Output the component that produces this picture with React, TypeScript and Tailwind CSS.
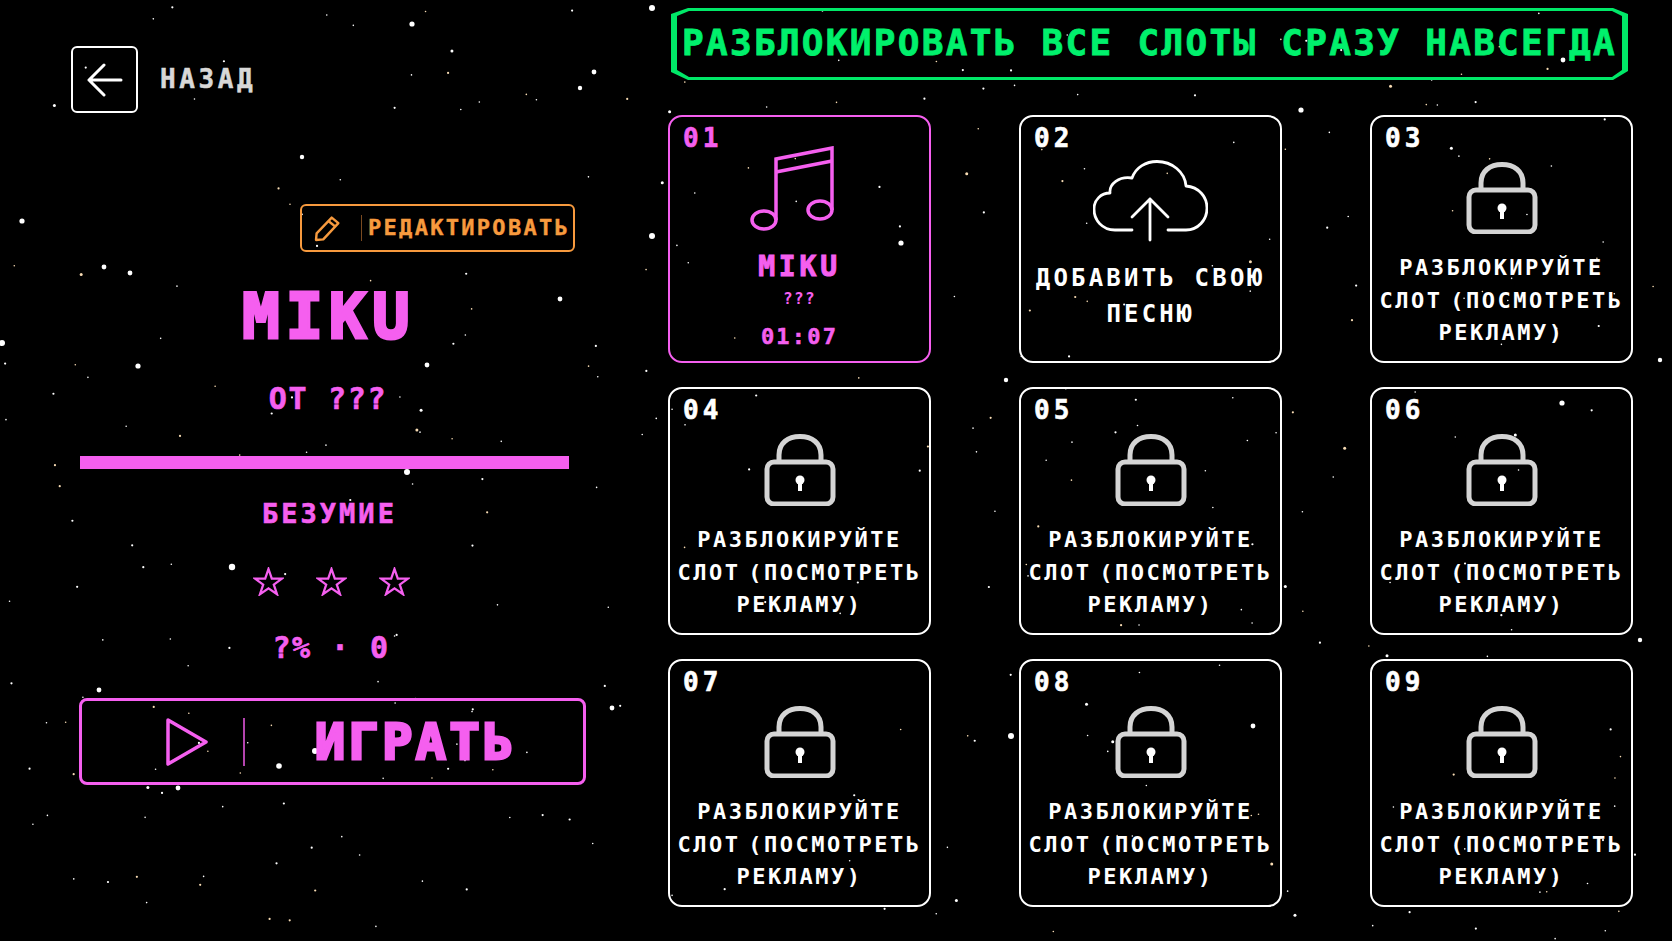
const PINK = "#f55fef";

// bright stars read off the reference, the small ones are seeded
const brightStars: [number, number, number][] = [
  [412, 24, 2.6], [594, 72, 2.4], [580, 88, 2.2], [22, 221, 2.6], [104, 267, 2.4], [130, 273, 2.4],
  [138, 366, 2.6], [427, 365, 2.4], [302, 157, 2.2], [560, 299, 2.4], [2, 343, 3], [407, 472, 3],
  [232, 567, 3.2], [279, 766, 2.8], [315, 751, 3], [99, 690, 2.4], [612, 708, 2.4], [178, 788, 2.4],
  [1301, 110, 2.6], [1011, 736, 3], [1562, 403, 2.6], [1253, 726, 2.4], [652, 8, 3], [652, 236, 3],
  [901, 243, 2.6], [1563, 60, 2.4], [1660, 360, 2.2], [1640, 640, 2.2], [1006, 380, 2.2],
];

function makeStars(count: number) {
  let seed = 4711;
  const next = () => {
    seed = (seed * 1664525 + 1013904223) % 4294967296;
    return seed / 4294967296;
  };
  const stars: { x: number; y: number; r: number; warm: boolean }[] = [];
  for (let i = 0; i < count; i++) {
    const size = next();
    stars.push({
      x: next() * 1672,
      y: next() * 941,
      r: size > 0.93 ? 1.5 : size > 0.55 ? 1.1 : 0.8,
      warm: next() > 0.75,
    });
  }
  return stars;
}

const smallStars = makeStars(340);

function StarField() {
  return (
    <svg className="absolute inset-0 h-full w-full" viewBox="0 0 1672 941">
      {smallStars.map((s, i) => (
        <circle key={i} cx={s.x} cy={s.y} r={s.r} fill={s.warm ? "#f8dcb4" : "#ffffff"} />
      ))}
      {brightStars.map(([x, y, r], i) => (
        <circle key={i} cx={x} cy={y} r={r} fill="#ffffff" />
      ))}
    </svg>
  );
}

function LockIcon() {
  return (
    <svg width="72" height="72" viewBox="0 0 72 72" fill="none" stroke="#d4d4d4" strokeWidth="5">
      <rect x="3" y="28" width="66" height="42" rx="7" />
      <path d="M15 28V21C15 9 24 2.5 36 2.5C48 2.5 57 9 57 21V28" />
      <circle cx="36" cy="46" r="4.5" fill="#ffffff" stroke="none" />
      <rect x="34" y="46" width="4" height="11" fill="#ffffff" stroke="none" />
    </svg>
  );
}

function MusicIcon() {
  return (
    <svg className="mr-[15px]" width="85" height="85" viewBox="0 0 85 85" fill="none" stroke={PINK} strokeWidth="3.5">
      <ellipse cx="14" cy="74" rx="12" ry="9" />
      <ellipse cx="70" cy="64" rx="12" ry="9" />
      <path d="M26 74V13L82 2V64" />
      <path d="M26 26L82 15" />
    </svg>
  );
}

function CloudIcon() {
  return (
    <svg width="115" height="83" viewBox="0 0 115 83" fill="none" stroke="#ffffff" strokeWidth="2.8" strokeLinecap="round" strokeLinejoin="round">
      <path d="M39 70H22C9 70 1 60 1 49C1 40 8 33 17 33C16 24 26 16 39 18C43 7 53 1.5 64 1.5C79 1.5 92 12 93 26C106 27 114 37 114 48C114 60 105 70 93 70H75" />
      <path d="M57 80V39M39 57L57 39L75 57" />
    </svg>
  );
}

function RatingStar() {
  return (
    <svg width="31" height="29" viewBox="0 0 31 29" fill="none" stroke={PINK} strokeWidth="2.3">
      <path d="M15.5 2L18.8 11.6H29L20.8 17.6L24 27.2L15.5 21.3L7 27.2L10.2 17.6L2 11.6H12.2Z" />
    </svg>
  );
}

function LockedCard({ num }: { num: string }) {
  return (
    <div className="relative flex h-[248px] flex-col items-center rounded-[14px] border-2 border-white pt-[45px] text-white">
      <span className="absolute left-[13px] top-[6px] text-[26px] leading-[30px] tracking-[4px] [-webkit-text-stroke:0.6px_currentColor]">{num}</span>
      <LockIcon />
      <p className="mt-[18px] text-center text-[22px] leading-[32.5px] tracking-[2.5px] [word-spacing:-8px]">
        РАЗБЛОКИРУЙТЕ СЛОТ (ПОСМОТРЕТЬ РЕКЛАМУ)
      </p>
    </div>
  );
}

export default function App() {
  return (
    <div className="relative h-[941px] w-[1672px] overflow-hidden bg-black font-['DejaVu_Sans_Mono',monospace] font-bold">
      <StarField />
      <div className="relative flex">
        {/* left column */}
        <div className="flex w-[668px] flex-col">
          <div className="ml-[71px] mt-[46px] flex items-center gap-[22px]">
            <div className="flex h-[67px] w-[67px] items-center justify-center rounded-[6px] border-2 border-white">
              <svg width="36" height="34" viewBox="0 0 36 34" fill="none" stroke="#ffffff" strokeWidth="3" strokeLinecap="round" strokeLinejoin="round">
                <path d="M2 17H34M17 2L2 17L17 32" />
              </svg>
            </div>
            <span className="mb-[2px] text-[26px] leading-[30px] tracking-[3.6px] text-[#d8d8d8] [-webkit-text-stroke:0.5px_currentColor]">НАЗАД</span>
          </div>

          <div className="ml-[300px] mt-[91px] flex h-[48px] w-[275px] items-center rounded-[6px] border-2 border-[#f79a3e] text-[#f79a3e]">
            <svg className="ml-[11px]" width="29" height="29" viewBox="0 0 24 24" fill="none" stroke="#f79a3e" strokeWidth="2" strokeLinejoin="round">
              <path d="M2.5 21.5L3 16L15.5 3L21 7.5L8.5 21L2.5 21.5Z" />
              <path d="M13 6L18.5 10.5" />
            </svg>
            <div className="ml-[19px] h-[26px] w-px bg-[#7a4a20]" />
            <span className="ml-[6px] text-[22px] leading-none tracking-[2.3px] [-webkit-text-stroke:0.4px_currentColor]">РЕДАКТИРОВАТЬ</span>
          </div>

          <h1 className="mt-[29px] ml-[3px] w-[652px] text-center text-[62px] leading-[72px] tracking-[6px] [-webkit-text-stroke:3px_currentColor]" style={{ color: PINK }}>MIKU</h1>
          <p className="mt-[28px] w-[656px] text-center text-[30px] leading-[36px] tracking-[1.7px] [-webkit-text-stroke:0.6px_currentColor]" style={{ color: PINK }}>ОТ ???</p>
          <div className="ml-[80px] mt-[39px] h-[13px] w-[489px]" style={{ backgroundColor: PINK }} />
          <p className="mt-[29px] w-[659px] text-center text-[27px] leading-[32px] tracking-[3px] [-webkit-text-stroke:0.6px_currentColor]" style={{ color: PINK }}>БЕЗУМИЕ</p>

          <div className="ml-[253px] mt-[37px] flex gap-[32px]">
            <RatingStar />
            <RatingStar />
            <RatingStar />
          </div>

          <p className="mt-[34px] w-[662px] text-center text-[30px] leading-[36px] tracking-[1.4px] [-webkit-text-stroke:0.6px_currentColor]" style={{ color: PINK }}>?% · 0</p>

          <div className="ml-[79px] mt-[32px] flex h-[87px] w-[507px] items-center rounded-[8px] border-[3px] border-[#f55fef]">
            <svg className="ml-[83px]" width="44" height="50" viewBox="0 0 44 50" fill="none" stroke={PINK} strokeWidth="3.5" strokeLinejoin="round">
              <path d="M3 3L41 25L3 47Z" />
            </svg>
            <div className="ml-[34px] h-[48px] w-[2px] bg-[#b344ae]" />
            <span className="ml-[70px] text-[50px] leading-none tracking-[3.5px] [-webkit-text-stroke:3px_currentColor]" style={{ color: PINK }}>ИГРАТЬ</span>
          </div>
        </div>

        {/* right column */}
        <div className="flex flex-col">
          <div className="relative ml-[3px] mt-[8px] h-[72px] w-[957px] pl-[11px] pt-[15px] text-[36px] leading-[40px] tracking-[2.3px] whitespace-nowrap text-[#00f06c] [-webkit-text-stroke:0.8px_currentColor]">
            <svg className="absolute inset-0" width="957" height="72" viewBox="0 0 957 72">
              <path fill="#00e868" fillRule="evenodd" d="M17 0H942L957 6V63L942 72H17L0 64V6ZM18 3L6 8V62L18 69H941L951 62V8L941 3Z" />
            </svg>
            РАЗБЛОКИРОВАТЬ ВСЕ СЛОТЫ СРАЗУ НАВСЕГДА
          </div>

          <div className="mt-[35px] grid grid-cols-[263px_263px_263px] gap-x-[88px] gap-y-[24px]">
            <div className="relative flex h-[248px] flex-col items-center rounded-[14px] border-2 border-[#f55fef] pt-[29px]" style={{ color: PINK }}>
              <span className="absolute left-[13px] top-[6px] text-[26px] leading-[30px] tracking-[4px] [-webkit-text-stroke:0.6px_currentColor]">01</span>
              <MusicIcon />
              <span className="mt-[20px] text-[28px] leading-[32px] tracking-[3.8px] [-webkit-text-stroke:1px_currentColor]">MIKU</span>
              <span className="mt-[6px] text-[16px] leading-[20px] tracking-[1.4px]">???</span>
              <span className="mt-[15px] text-[22px] leading-[26px] tracking-[2.2px] [-webkit-text-stroke:0.5px_currentColor]">01:07</span>
            </div>

            <div className="relative flex h-[248px] flex-col items-center rounded-[14px] border-2 border-white pt-[43px] text-white">
              <span className="absolute left-[13px] top-[6px] text-[26px] leading-[30px] tracking-[4px] [-webkit-text-stroke:0.6px_currentColor]">02</span>
              <CloudIcon />
              <p className="mt-[17px] text-center text-[24px] leading-[36px] tracking-[3.2px]">ДОБАВИТЬ СВОЮ ПЕСНЮ</p>
            </div>

            {["03", "04", "05", "06", "07", "08", "09"].map((num) => (
              <LockedCard key={num} num={num} />
            ))}
          </div>
        </div>
      </div>
    </div>
  );
}
